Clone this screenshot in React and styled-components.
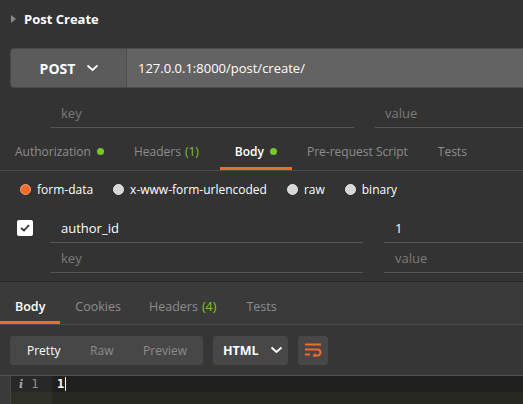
import React from "react";
import styled, { createGlobalStyle } from "styled-components";

const GlobalStyle = createGlobalStyle`
  html, body {
    margin: 0;
    padding: 0;
    background: #333333;
  }
  body {
    font-family: "Open Sans", "Liberation Sans", sans-serif;
    -webkit-font-smoothing: antialiased;
  }
`;

const ORANGE = "#f26b2c";
const GREEN = "#7bc62a";

export default function App() {
  return (
    <>
      <GlobalStyle />
      <Page>
        <TitleRow>
          <Caret />
          <Title>Post Create</Title>
        </TitleRow>

        <UrlBar>
          <Method>
            POST
            <Chevron />
          </Method>
          <UrlText>127.0.0.1:8000/post/create/</UrlText>
        </UrlBar>

        <ParamRow>
          <Cell $width="304px" $pad="11px" $placeholder $bottom>
            key
          </Cell>
          <Cell $width="148px" $pad="10px" $placeholder $bottom>
            value
          </Cell>
        </ParamRow>

        <TabBar $height="43px">
          <Tab>
            Authorization <Dot />
          </Tab>
          <Tab $right="21px">
            Headers <Count>(1)</Count>
          </Tab>
          <Tab $active>
            Body <Dot />
          </Tab>
          <Tab>Pre-request Script</Tab>
          <Tab>Tests</Tab>
        </TabBar>

        <RadioRow>
          <RadioItem>
            <Radio $checked />
            form-data
          </RadioItem>
          <RadioItem>
            <Radio />
            x-www-form-urlencoded
          </RadioItem>
          <RadioItem>
            <Radio />
            raw
          </RadioItem>
          <RadioItem>
            <Radio />
            binary
          </RadioItem>
        </RadioRow>

        <FormList>
          <FormRow>
            <CheckCell>
              <CheckBox>
                <svg width="10" height="8" viewBox="0 0 10 8">
                  <polyline
                    points="1,4 4,6.5 9,1"
                    fill="none"
                    stroke="#333"
                    strokeWidth="1.8"
                  />
                </svg>
              </CheckBox>
            </CheckCell>
            <Cell $width="313px" $pad="11px">
              author_id
            </Cell>
            <Cell $width="139px" $pad="11px" $gap="21px">
              1
            </Cell>
          </FormRow>
          <FormRow>
            <CheckCell />
            <Cell $width="313px" $pad="11px" $placeholder>
              key
            </Cell>
            <Cell $width="139px" $pad="11px" $gap="21px" $placeholder>
              value
            </Cell>
          </FormRow>
        </FormList>

        <Response>
          <TabBar $height="43px">
            <Tab $active $size="12.5px" $top="10px">
              Body
            </Tab>
            <Tab $size="12.5px" $top="10px" $right="13px">
              Cookies
            </Tab>
            <Tab $size="12.5px" $top="10px">
              Headers <Count>(4)</Count>
            </Tab>
            <Tab $size="12.5px" $top="10px">
              Tests
            </Tab>
          </TabBar>

          <Toolbar>
            <Segmented>
              <Segment $active>Pretty</Segment>
              <Segment>Raw</Segment>
              <Segment>Preview</Segment>
            </Segmented>
            <Dropdown>
              HTML
              <Chevron />
            </Dropdown>
            <IconButton>
              <svg width="18" height="14" viewBox="0 0 18 14">
                <g fill="none" stroke={ORANGE} strokeWidth="2">
                  <line x1="1" y1="1.5" x2="17" y2="1.5" />
                  <path d="M1 6.5 H13.5 a3 3 0 0 1 0 6 H10" />
                  <line x1="1" y1="11.5" x2="6" y2="11.5" />
                </g>
                <polygon points="8.5,12.5 11.5,9.8 11.5,15" fill={ORANGE} />
              </svg>
            </IconButton>
          </Toolbar>

          <Editor>
            <EditorLine $active>
              <Gutter $active>
                <InfoMark>i</InfoMark>
                <LineNo>1</LineNo>
              </Gutter>
              <Code>
                1<Cursor />
              </Code>
            </EditorLine>
            <EditorLine>
              <Gutter />
            </EditorLine>
          </Editor>
        </Response>
      </Page>
    </>
  );
}

function Caret() {
  return (
    <svg width="6" height="8" viewBox="0 0 6 8">
      <polygon points="0,0 5,4 0,8" fill="#8a8a8a" />
    </svg>
  );
}

function Chevron() {
  return (
    <svg width="13" height="8" viewBox="0 0 13 8" style={{ marginLeft: 11 }}>
      <polyline
        points="1.5,1.5 6.5,6 11.5,1.5"
        fill="none"
        stroke="#fff"
        strokeWidth="1.8"
      />
    </svg>
  );
}

const Page = styled.div`
  width: 523px;
  height: 404px;
  overflow: hidden;
  display: flex;
  flex-direction: column;
  background: #333333;
`;

const TitleRow = styled.div`
  height: 38px;
  display: flex;
  align-items: center;
  gap: 7px;
  padding-left: 11px;
`;

const Title = styled.span`
  color: #ffffff;
  font-size: 13px;
  font-weight: 700;
`;

const UrlBar = styled.div`
  margin: 10px -10px 0 10px;
  height: 40px;
  display: flex;
  border-radius: 3px;
  overflow: hidden;
  border: 1px solid #4a4a4a;
  box-sizing: border-box;
`;

const Method = styled.div`
  width: 116px;
  display: flex;
  align-items: center;
  justify-content: center;
  background: #5b5b5b;
  border-right: 1px solid #4e4e4e;
  color: #fff;
  font-size: 14px;
  font-weight: 700;
  padding-left: 2px;
  box-sizing: border-box;
`;

const UrlText = styled.div`
  flex: 1;
  display: flex;
  align-items: center;
  padding-left: 11px;
  background: #636363;
  color: #fff;
  font-size: 13px;
`;

const ParamRow = styled.div`
  display: flex;
  gap: 21px;
  padding-left: 50px;
  height: 40px;
`;

const Cell = styled.div`
  width: ${(p) => p.$width};
  margin-left: ${(p) => p.$gap || "0"};
  flex-shrink: 0;
  display: flex;
  align-items: ${(p) => (p.$bottom ? "flex-end" : "center")};
  padding-left: ${(p) => p.$pad};
  padding-bottom: ${(p) => (p.$bottom ? "5px" : "0")};
  box-sizing: border-box;
  border-bottom: 1px solid #555555;
  color: ${(p) => (p.$placeholder ? "#7b7b7b" : "#ffffff")};
  font-size: 13px;
`;

const TabBar = styled.div`
  height: ${(p) => p.$height};
  display: flex;
  align-items: stretch;
  border-bottom: 1px solid #4a4a4a;
  box-sizing: border-box;
  flex-shrink: 0;
`;

const Tab = styled.div`
  display: flex;
  align-items: center;
  gap: 4px;
  padding: 0 ${(p) => p.$right || "15px"} 0 15px;
  padding-top: ${(p) => p.$top || "8px"};
  color: ${(p) => (p.$active ? "#ffffff" : "#8e8e8e")};
  font-weight: ${(p) => (p.$active ? 600 : 400)};
  font-size: ${(p) => p.$size || "12px"};
  white-space: nowrap;
  border-bottom: 3px solid ${(p) => (p.$active ? ORANGE : "transparent")};
`;

const Dot = styled.span`
  width: 7px;
  height: 7px;
  border-radius: 50%;
  background: ${GREEN};
  margin-left: 2px;
`;

const Count = styled.span`
  color: ${GREEN};
`;

const RadioRow = styled.div`
  height: 36px;
  display: flex;
  align-items: center;
  gap: 20px;
  padding-left: 20px;
`;

const RadioItem = styled.label`
  display: flex;
  align-items: center;
  gap: 6px;
  color: #ffffff;
  font-size: 12px;
`;

const Radio = styled.span`
  width: 11px;
  height: 11px;
  border-radius: 50%;
  box-sizing: border-box;
  background: ${(p) => (p.$checked ? ORANGE : "#d8d8d8")};
  border: 1px solid ${(p) => (p.$checked ? "#f0a07a" : "#e6e6e6")};
`;

const FormList = styled.div`
  padding-top: 6px;
`;

const FormRow = styled.div`
  height: 30px;
  display: flex;
`;

const CheckCell = styled.div`
  width: 50px;
  flex-shrink: 0;
  display: flex;
  align-items: center;
  padding-left: 17px;
  box-sizing: border-box;
`;

const CheckBox = styled.span`
  width: 16px;
  height: 16px;
  border-radius: 2px;
  background: #ffffff;
  display: flex;
  align-items: center;
  justify-content: center;
`;

const Response = styled.div`
  margin-top: 8px;
  border-top: 1px solid #2a2a2a;
  background: #3a3a3a;
  flex: 1;
  display: flex;
  flex-direction: column;
`;

const Toolbar = styled.div`
  height: 51px;
  display: flex;
  align-items: center;
  gap: 10px;
  padding-left: 10px;
  border-bottom: 1px solid #555;
  box-sizing: border-box;
  background: #363636;
`;

const Segmented = styled.div`
  height: 29px;
  width: 193px;
  display: flex;
  justify-content: space-between;
  padding: 0 16px 0 17px;
  box-sizing: border-box;
  background: #474747;
  border-radius: 3px;
`;

const Segment = styled.div`
  display: flex;
  align-items: center;
  color: ${(p) => (p.$active ? "#ffffff" : "#8c8c8c")};
  font-size: 12px;
`;

const Dropdown = styled.div`
  height: 29px;
  width: 75px;
  box-sizing: border-box;
  display: flex;
  align-items: center;
  padding-left: 10px;
  background: #474747;
  border-radius: 3px;
  color: #fff;
  font-weight: 700;
  font-size: 12.5px;
`;

const IconButton = styled.div`
  width: 30px;
  height: 29px;
  display: flex;
  align-items: center;
  justify-content: center;
  background: #474747;
  border-radius: 3px;
`;

const Editor = styled.div`
  flex: 1;
  margin-left: 10px;
  border-left: 1px solid #444;
  background: #272822;
  display: flex;
  flex-direction: column;
  font-family: "DejaVu Sans Mono", "Liberation Mono", monospace;
  font-size: 12px;
`;

const EditorLine = styled.div`
  height: 16px;
  display: flex;
  background: ${(p) => (p.$active ? "#1f1f1f" : "transparent")};
  flex: ${(p) => (p.$active ? "0 0 16px" : "1")};
`;

const Gutter = styled.div`
  width: 41px;
  display: flex;
  align-items: center;
  gap: 8px;
  padding-left: 8px;
  box-sizing: border-box;
  background: ${(p) => (p.$active ? "#282828" : "#2f3129")};
`;

const InfoMark = styled.span`
  color: #a8a8a8;
  font-family: "DejaVu Serif", serif;
  font-style: italic;
  font-weight: 700;
  font-size: 11px;
`;

const LineNo = styled.span`
  color: #8f908a;
`;

const Code = styled.div`
  display: flex;
  align-items: center;
  padding-left: 5px;
  color: #f8f8f2;
  font-weight: 700;
`;

const Cursor = styled.span`
  width: 1px;
  height: 14px;
  background: #f8f8f0;
  margin-left: 1px;
`;
